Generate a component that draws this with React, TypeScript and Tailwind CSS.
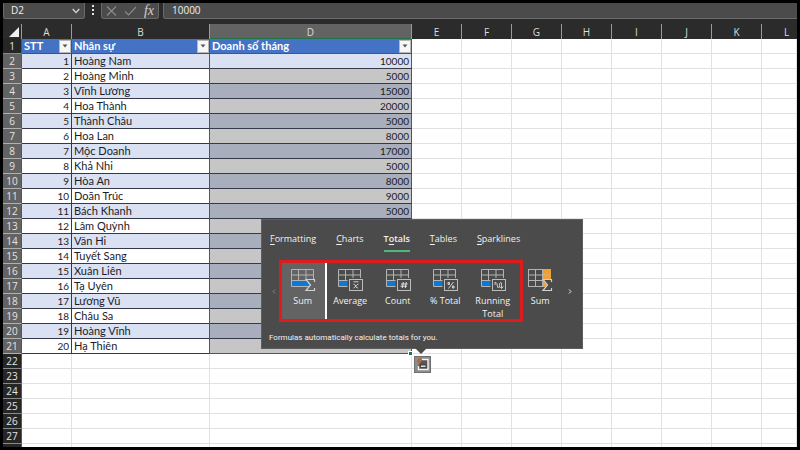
import React from "react";

const names = [
  "Hoàng Nam", "Hoàng Minh", "Vĩnh Lương", "Hoa Thành", "Thành Châu", "Hoa Lan", "Mộc Doanh",
  "Khả Nhi", "Hòa An", "Doãn Trúc", "Bách Khanh", "Lâm Quỳnh", "Văn Hi", "Tuyết Sang",
  "Xuân Liên", "Tạ Uyên", "Lương Vũ", "Châu Sa", "Hoàng Vĩnh", "Hạ Thiên",
];
const sales = [10000, 5000, 15000, 20000, 5000, 8000, 17000, 5000, 8000, 9000, 5000];
const emptyCols = ["E", "F", "G", "H", "I", "J", "K", "L"];

const grid = "border-b border-r border-[#e1e1e1]";
const headLine = "border-r border-[#9a9a9a] font-normal p-0";

function FilterButton({ label }: { label: string }) {
  return (
    <button aria-label={label} className="flex h-[13px] w-[12px] shrink-0 items-center justify-center border border-[#b8b8b8] bg-[#f7f7f7]">
      <svg width="6" height="4" viewBox="0 0 6 4"><path d="M0.5 0.5h5L3 3.5z" fill="#555" /></svg>
    </button>
  );
}

function HeadCell({ text, edge }: { text: string; edge?: string }) {
  return (
    <td className={`border-b border-[#2f559c] bg-[#4472c4] p-0 ${edge ?? ""}`}>
      <div className="flex h-[14px] items-center justify-between pl-[2px]">
        <span className="font-bold text-white">{text}</span>
        <FilterButton label={`Filter ${text}`} />
      </div>
    </td>
  );
}

function Blank() {
  return <>{emptyCols.map((c) => <td key={c} className={grid} />)}</>;
}

function Sheet() {
  return (
    <table className="w-full table-fixed border-separate border-spacing-0 bg-white font-['Lato','Noto_Sans',sans-serif] text-[11px] leading-[14px] text-[#1c1c28]">
      <colgroup>
        <col className="w-[19px]" /><col className="w-[50px]" /><col className="w-[138px]" /><col className="w-[202px]" />
        <col className="w-[50px]" /><col className="w-[50px]" /><col className="w-[50px]" /><col className="w-[50px]" />
        <col className="w-[50px]" /><col className="w-[50px]" /><col className="w-[50px]" /><col />
      </colgroup>
      <thead className="font-['Open_Sans','Noto_Sans',sans-serif] text-[10px] text-[#dcdcdc]">
        <tr className="h-[15px] bg-[#2b2b2b]">
          <th aria-label="Select all" className={headLine}>
            <svg className="ml-auto" width="14" height="12" viewBox="0 0 14 12"><path d="M12 1v10H2z" fill="#f0f0f0" /></svg>
          </th>
          <th className={headLine}>A</th>
          <th className={headLine}>B</th>
          <th className={`${headLine} bg-[#636363] shadow-[inset_0_-1px_0_#217346]`}>D</th>
          {emptyCols.map((c) => <th key={c} className={c === "L" ? "p-0 pl-[14px] font-normal" : headLine}>{c}</th>)}
        </tr>
      </thead>
      <tbody>
        <tr className="h-[15px]">
          <RowHead n={1} />
          <HeadCell text="STT" edge="border-r border-r-[#2f559c]" />
          <HeadCell text="Nhân sự" edge="border-r border-r-[#2f559c]" />
          <HeadCell text="Doanh số tháng" edge="border-r border-r-[#217346] border-b-[#217346]" />
          <Blank />
        </tr>
        {names.map((name, i) => {
          const band = i % 2 === 0;
          const last = i === names.length - 1;
          const bg = band ? "bg-[#d9e1f2]" : "bg-white";
          const sel = i === 0 ? "bg-[#d9e1f2]" : band ? "bg-[#a8aebc]" : "bg-[#c6c6c6]";
          return (
            <tr key={name} className="h-[15px]">
              <RowHead n={i + 2} selected />
              <td className={`border-b border-r border-[#343a4c] p-0 pr-[2px] text-right text-[10px] ${bg}`}>{i + 1}</td>
              <td className={`border-b border-r border-b-[#343a4c] border-r-[#217346] p-0 pl-[2px] ${bg}`}>{name}</td>
              <td className={`border-b border-r border-r-[#217346] p-0 pr-[2px] text-right text-[10px] ${last ? "border-b-[#217346]" : "border-b-[#343a4c]"} ${sel}`}>{sales[i]}</td>
              <Blank />
            </tr>
          );
        })}
        {[22, 23, 24, 25, 26, 27, 28].map((n) => (
          <tr key={n} className="h-[15px]">
            <RowHead n={n} />
            <td className={grid} /><td className={grid} /><td className={grid} />
            <Blank />
          </tr>
        ))}
      </tbody>
    </table>
  );
}

function RowHead({ n, selected }: { n: number; selected?: boolean }) {
  return (
    <th className={`border-b border-r p-0 font-['Open_Sans','Noto_Sans',sans-serif] text-[10px] font-normal text-[#e4e4e4] ${selected ? "border-b-[#b0b0b0] border-r-[#217346] bg-[#636363]" : "border-b-[#8a8a8a] border-r-[#555] bg-[#262626]"}`}>
      {n < 28 ? n : ""}
    </th>
  );
}

function FormulaBar() {
  return (
    <div className="flex h-[21px] items-start bg-[#2b2b2b] font-['Open_Sans','Noto_Sans',sans-serif] text-[10px] text-[#f0f0f0]">
      <div className="flex h-[16px] w-[82px] items-center rounded-b-[3px] border border-t-0 border-[#696969] bg-[#4b4b4b] pr-[4px]">
        <input aria-label="Name box" defaultValue="D2" className="h-[14px] min-w-0 flex-1 bg-transparent pl-[7px] outline-none" />
        <button aria-label="Open name list">
          <svg width="8" height="6" viewBox="0 0 8 6" fill="none" stroke="#ddd" strokeWidth="1.2"><path d="M0.7 1L4 4.6 7.3 1" /></svg>
        </button>
      </div>
      <svg className="mx-[6px] mt-[1px] shrink-0" width="4" height="12" viewBox="0 0 4 12" fill="#e6e6e6">
        <rect x="1" y="1" width="2" height="2" /><rect x="1" y="5" width="2" height="2" /><rect x="1" y="9" width="2" height="2" />
      </svg>
      <div className="flex h-[16px] w-[58px] shrink-0 items-center justify-between rounded-b-[3px] border border-t-0 border-[#696969] bg-[#4b4b4b] px-[4px]">
        <button aria-label="Cancel"><svg width="11" height="10" viewBox="0 0 11 10" stroke="#8c8c8c" strokeWidth="1.1"><path d="M1 0.5l9 9M10 0.5l-9 9" /></svg></button>
        <button aria-label="Enter"><svg width="13" height="10" viewBox="0 0 13 10" fill="none" stroke="#8c8c8c" strokeWidth="1.1"><path d="M1 5.5L4.5 9 12 1" /></svg></button>
        <button aria-label="Insert function" className="font-['Liberation_Serif',serif] text-[14px] leading-[14px] text-[#d0d0d0] italic">fx</button>
      </div>
      <input aria-label="Formula bar" defaultValue="10000" className="ml-[4px] h-[16px] min-w-0 flex-1 rounded-bl-[3px] border border-t-0 border-r-0 border-[#696969] bg-[#4b4b4b] pb-[2px] pl-[8px] outline-none" />
    </div>
  );
}

type Kind = "sum" | "avg" | "count" | "pct" | "run" | "sumcol";

function TotalIcon({ kind }: { kind: Kind }) {
  const sigma = kind === "sum" || kind === "sumcol";
  return (
    <svg width="26" height="24" viewBox="0 0 26 24" fill="none">
      {kind === "sumcol"
        ? <rect x="16" y="1" width="8" height="18" fill="#f0a030" />
        : <rect x="2" y="13" width={kind === "sum" ? 21 : 9} height="5" fill="#0f78d4" />}
      <path d={kind === "sumcol" ? "M1.5 1.5h14M1.5 7h22M1.5 12.5h22M1.5 18.5h14M1.5 1v18M8.5 1v18M15.5 1v18" : "M1.5 1.5h22v17h-22zM1.5 7h22M1.5 12.5h22M8.5 1.5v11M16 1.5v11"} stroke="#b4b4b4" />
      {sigma ? (
        <>
          <path d="M15 11h11v12H15l5-6z" fill={kind === "sum" ? "#636363" : "#4b4b4b"} />
          <path d="M24.5 14v-2.5h-8.5l4.5 5.5-4.5 5.5h8.5V20" stroke="#d0d0d0" strokeWidth="1.2" />
        </>
      ) : (
        <>
          <rect x="10.5" y="10" width="15" height="13" fill="#4b4b4b" />
          <rect x="12.5" y="11.5" width="13" height="11" stroke="#bcbcbc" />
          {kind === "avg" && <path d="M16.5 13.8h5M16.5 16c2-.5 2 4.5 4.5 4M21.5 16c-2 0-3 4-5 4" stroke="#ddd" strokeWidth=".9" />}
          {kind === "count" && <path d="M18.3 14l-1 6M21.3 14l-1 6M16 16h6.5M15.5 18.2h6.5" stroke="#eee" strokeWidth=".9" />}
          {kind === "pct" && <path d="M21.5 14l-5 6.5M16 14.5h1.5v2H16zM20.5 18H22v2h-1.5z" stroke="#e4e4e4" strokeWidth=".9" />}
          {kind === "run" && <path d="M15 17v-2.5h1c1.500 0 1 5.500 2.500 5.500s.500-5.500 2-5.500 1 2 1 5.500M19.800 18.500l1.700 2 1.700-2" stroke="#ddd" strokeWidth=".9" />}
        </>
      )}
    </svg>
  );
}

const totals: { kind: Kind; label: string }[] = [
  { kind: "sum", label: "Sum" }, { kind: "avg", label: "Average" }, { kind: "count", label: "Count" },
  { kind: "pct", label: "% Total" }, { kind: "run", label: "Running Total" }, { kind: "sumcol", label: "Sum" },
];
const tabs = [["", "F", "ormatting"], ["", "C", "harts"], ["T", "o", "tals"], ["", "T", "ables"], ["", "S", "parklines"]];

function QuickAnalysis() {
  return (
    <div className="absolute top-[216px] left-[258px] w-[322px] border border-[#5e5e5e] bg-[#4b4b4b] pb-[4px] font-['Open_Sans','Noto_Sans',sans-serif] text-[9px] leading-[12px] text-[#f2f2f2]">
      <div role="tablist" className="flex gap-[20px] pt-[13px] pl-[8px]">
        {tabs.map(([pre, key, post]) => (
          <button key={key + post} role="tab" aria-selected={key === "o"} className={`h-[19px] border-b-2 pb-[5px] ${key === "o" ? "border-[#55b47a] font-semibold" : "border-transparent"}`}>
            {pre}<span className="underline underline-offset-2">{key}</span>{post}
          </button>
        ))}
      </div>
      <div className="relative mt-[8px] flex h-[62px] items-center">
        <button aria-label="Previous" className="flex w-[17px] justify-center pl-[6px]">
          <svg width="4" height="5" viewBox="0 0 4 5" fill="none" stroke="#888"><path d="M3 .5l-2 2 2 2" /></svg>
        </button>
        <div className="grid h-full w-[285px] grid-cols-6">
          {totals.map(({ kind, label }, i) => (
            <button key={i} className={`flex flex-col items-center pt-[8px] ${kind === "sum" ? "border-r-2 border-white bg-[#636363] pl-[2px]" : ""}`}>
              <TotalIcon kind={kind} />
              <span className="mt-[2px] px-[4px] leading-[13px]">{label}</span>
            </button>
          ))}
        </div>
        <button aria-label="Next" className="pl-[4px]">
          <svg width="4" height="5" viewBox="0 0 4 5" fill="none" stroke="#eee"><path d="M1 .5l2 2-2 2" /></svg>
        </button>
        <div className="pointer-events-none absolute inset-y-0 left-[17px] w-[244px] border-3 border-[#e01b1b]" />
      </div>
      <p className="mt-[10px] pl-[7px] font-['Roboto','Noto_Sans',sans-serif] text-[8px]">Formulas automatically calculate totals for you.</p>
      <svg className="absolute top-full left-[153px]" width="12" height="6" viewBox="0 0 12 6"><path d="M0 0h12L6 6z" fill="#4b4b4b" /></svg>
    </div>
  );
}

export default function App() {
  return (
    <div className="h-screen overflow-hidden bg-black p-[3px]">
      <div className="relative h-full overflow-hidden bg-white">
        <FormulaBar />
        <Sheet />
        <div className="absolute top-[348px] left-[405px] size-[5px] border border-white bg-[#217346]" />
        <QuickAnalysis />
        <button aria-label="Quick analysis" className="absolute top-[353px] left-[411px] flex size-[17px] items-center justify-center border border-[#707070] bg-[#8c8c8c]">
          <svg className="shrink-0" width="15" height="15" viewBox="0 0 15 15" fill="none">
            <path d="M7 2.500h6v10H3.500V8" fill="#555" />
            <path d="M7 2.500h6v10H3.500V9" stroke="#f4f4f4" strokeWidth="1.400" />
            <path d="M5.500 10.500V8h5.500v2.500z" fill="#ddd" stroke="#333" strokeWidth=".8" />
            <path d="M4 1L1.500 5h2L2 9l5-5H5L6.500 1z" fill="#b8662c" />
          </svg>
        </button>
      </div>
    </div>
  );
}
